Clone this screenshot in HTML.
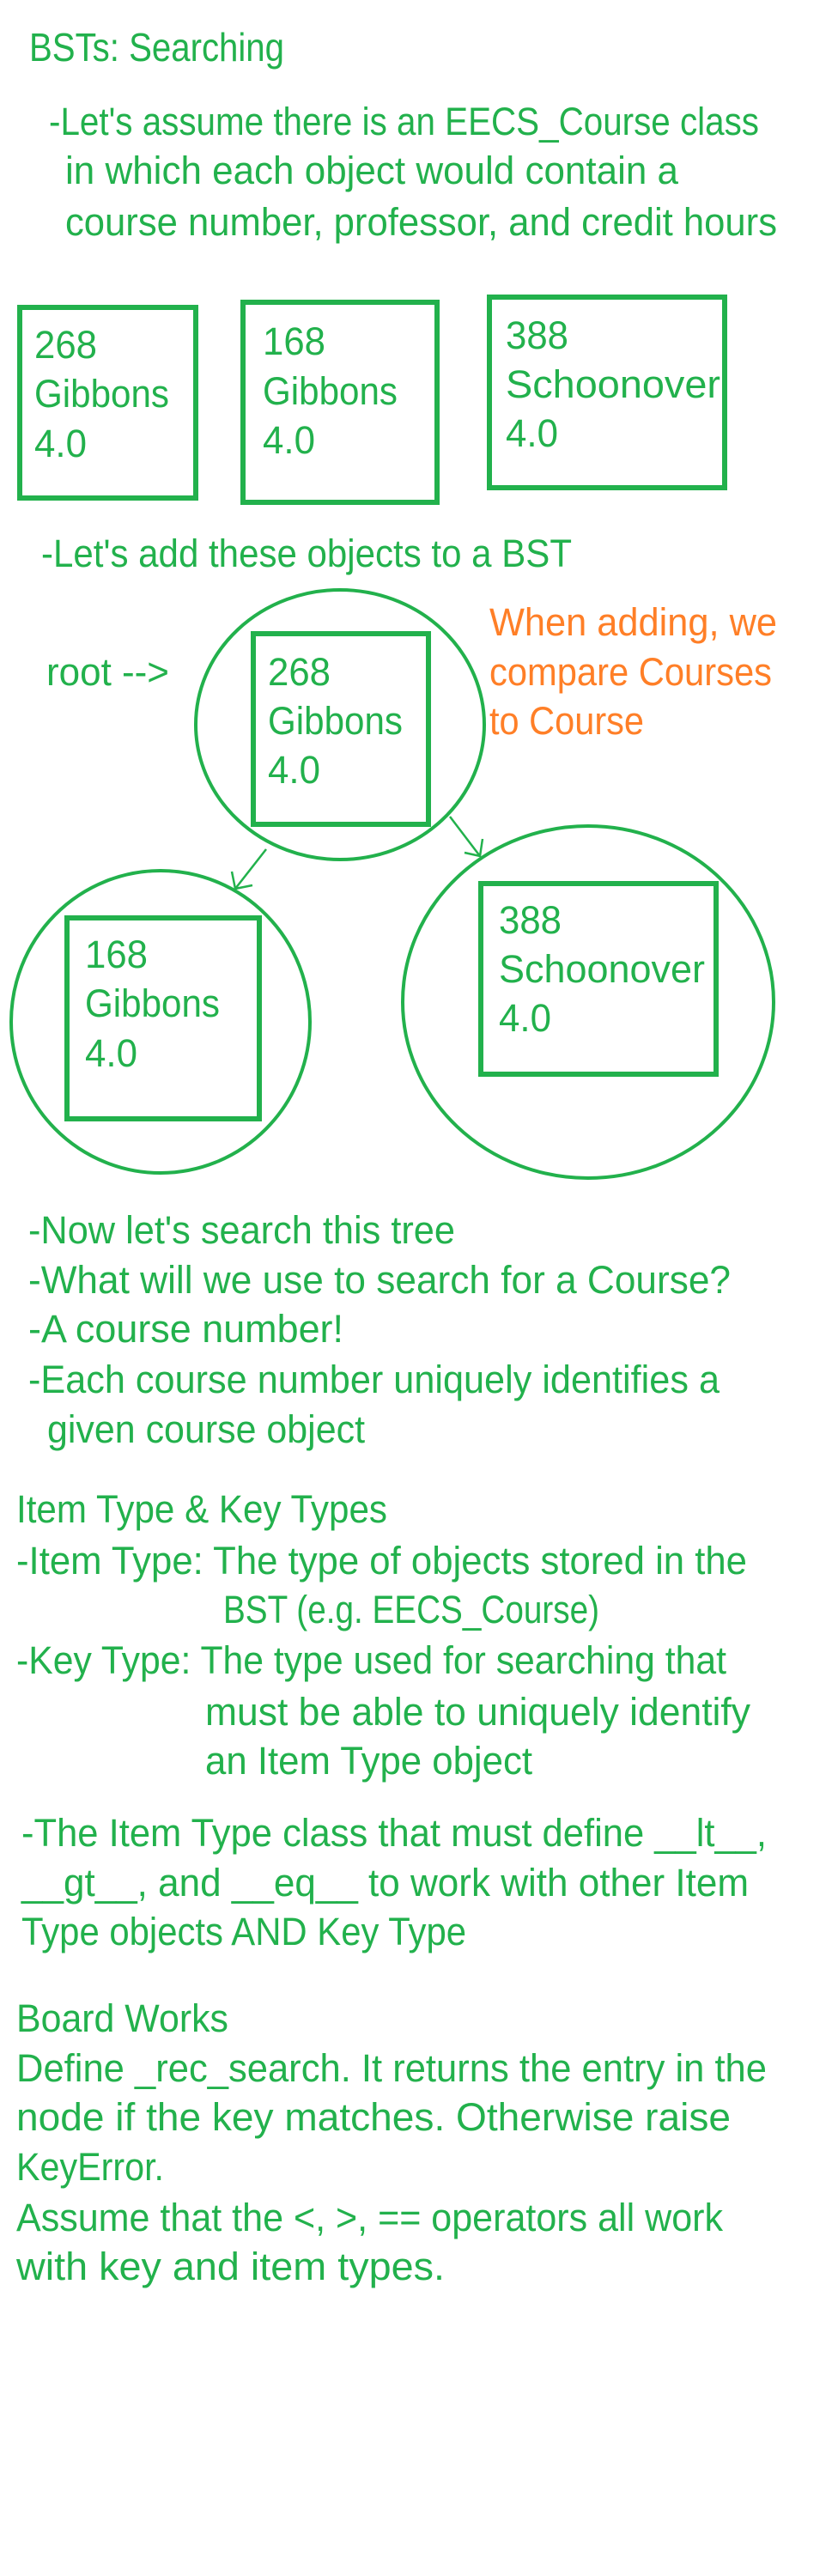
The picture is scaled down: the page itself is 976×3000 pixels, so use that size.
<!DOCTYPE html>
<html><head><meta charset="utf-8"><style>
html,body{margin:0;padding:0;background:#fff;}
svg{display:block;}
text{font-family:"Liberation Sans",sans-serif;font-size:45px;fill:#22b14c;}
.o{fill:#ff7f27;}
</style></head><body>
<svg width="976" height="3000" viewBox="0 0 976 3000" xmlns="http://www.w3.org/2000/svg">
<text x="34" y="71" textLength="297" lengthAdjust="spacingAndGlyphs" style="font-size:46px">BSTs: Searching</text>
<text x="57" y="157" textLength="827" lengthAdjust="spacingAndGlyphs">-Let's assume there is an EECS_Course class</text>
<text x="76" y="214" textLength="714" lengthAdjust="spacingAndGlyphs">in which each object would contain a</text>
<text x="76" y="274" textLength="829" lengthAdjust="spacingAndGlyphs">course number, professor, and credit hours</text>
<g fill="none" stroke="#22b14c" stroke-width="6">
<rect x="23" y="358" width="205" height="222"/>
<rect x="283" y="352" width="226" height="233"/>
<rect x="570" y="346" width="274" height="222"/>
</g>
<text x="40" y="417" textLength="73" lengthAdjust="spacingAndGlyphs">268</text>
<text x="40" y="474" textLength="157" lengthAdjust="spacingAndGlyphs">Gibbons</text>
<text x="40" y="532" textLength="61" lengthAdjust="spacingAndGlyphs">4.0</text>
<text x="306" y="413" textLength="73" lengthAdjust="spacingAndGlyphs">168</text>
<text x="306" y="471" textLength="157" lengthAdjust="spacingAndGlyphs">Gibbons</text>
<text x="306" y="528" textLength="61" lengthAdjust="spacingAndGlyphs">4.0</text>
<text x="589" y="406" textLength="73" lengthAdjust="spacingAndGlyphs">388</text>
<text x="589" y="463" textLength="250" lengthAdjust="spacingAndGlyphs">Schoonover</text>
<text x="589" y="520" textLength="61" lengthAdjust="spacingAndGlyphs">4.0</text>

<text x="48" y="660" textLength="618" lengthAdjust="spacingAndGlyphs">-Let's add these objects to a BST</text>

<text x="54" y="798" textLength="143" lengthAdjust="spacingAndGlyphs">root --&gt;</text>
<text class="o" x="570" y="740" textLength="335" lengthAdjust="spacingAndGlyphs">When adding, we</text>
<text class="o" x="570" y="798" textLength="329" lengthAdjust="spacingAndGlyphs">compare Courses</text>
<text class="o" x="570" y="855" textLength="180" lengthAdjust="spacingAndGlyphs">to Course</text>

<g fill="none" stroke="#22b14c">
<ellipse cx="396" cy="844" rx="168" ry="157" stroke-width="4"/>
<rect x="295" y="738" width="204" height="222" stroke-width="6"/>
<ellipse cx="187" cy="1190" rx="174" ry="176" stroke-width="4"/>
<rect x="78" y="1069" width="224" height="234" stroke-width="6"/>
<ellipse cx="685" cy="1167" rx="216" ry="205" stroke-width="4"/>
<rect x="560" y="1029" width="274" height="222" stroke-width="6"/>
<path d="M310 989 L274 1035 M270 1015 L274 1035 L294 1031" stroke-width="2.5"/>
<path d="M524 951 L559 997 M562 977 L559 997 L541 993" stroke-width="2.5"/>
</g>
<text x="312" y="798" textLength="73" lengthAdjust="spacingAndGlyphs">268</text>
<text x="312" y="855" textLength="157" lengthAdjust="spacingAndGlyphs">Gibbons</text>
<text x="312" y="912" textLength="61" lengthAdjust="spacingAndGlyphs">4.0</text>
<text x="99" y="1127" textLength="73" lengthAdjust="spacingAndGlyphs">168</text>
<text x="99" y="1184" textLength="157" lengthAdjust="spacingAndGlyphs">Gibbons</text>
<text x="99" y="1242" textLength="61" lengthAdjust="spacingAndGlyphs">4.0</text>
<text x="581" y="1087" textLength="73" lengthAdjust="spacingAndGlyphs">388</text>
<text x="581" y="1144" textLength="240" lengthAdjust="spacingAndGlyphs">Schoonover</text>
<text x="581" y="1201" textLength="61" lengthAdjust="spacingAndGlyphs">4.0</text>

<text x="33" y="1448" textLength="497" lengthAdjust="spacingAndGlyphs">-Now let's search this tree</text>
<text x="33" y="1506" textLength="818" lengthAdjust="spacingAndGlyphs">-What will we use to search for a Course?</text>
<text x="33" y="1563" textLength="367" lengthAdjust="spacingAndGlyphs">-A course number!</text>
<text x="33" y="1622" textLength="805" lengthAdjust="spacingAndGlyphs">-Each course number uniquely identifies a</text>
<text x="55" y="1680" textLength="370" lengthAdjust="spacingAndGlyphs">given course object</text>

<text x="19" y="1773" textLength="432" lengthAdjust="spacingAndGlyphs">Item Type &amp; Key Types</text>
<text x="19" y="1833" textLength="851" lengthAdjust="spacingAndGlyphs">-Item Type: The type of objects stored in the</text>
<text x="260" y="1890" textLength="438" lengthAdjust="spacingAndGlyphs">BST (e.g. EECS_Course)</text>
<text x="19" y="1949" textLength="827" lengthAdjust="spacingAndGlyphs">-Key Type: The type used for searching that</text>
<text x="239" y="2009" textLength="635" lengthAdjust="spacingAndGlyphs">must be able to uniquely identify</text>
<text x="239" y="2066" textLength="381" lengthAdjust="spacingAndGlyphs">an Item Type object</text>

<text x="25" y="2150" textLength="868" lengthAdjust="spacingAndGlyphs">-The Item Type class that must define __lt__,</text>
<text x="25" y="2208" textLength="847" lengthAdjust="spacingAndGlyphs">__gt__, and __eq__ to work with other Item</text>
<text x="25" y="2265" textLength="518" lengthAdjust="spacingAndGlyphs">Type objects AND Key Type</text>

<text x="19" y="2366" textLength="247" lengthAdjust="spacingAndGlyphs">Board Works</text>
<text x="19" y="2424" textLength="874" lengthAdjust="spacingAndGlyphs">Define _rec_search. It returns the entry in the</text>
<text x="19" y="2481" textLength="832" lengthAdjust="spacingAndGlyphs">node if the key matches. Otherwise raise</text>
<text x="19" y="2539" textLength="172" lengthAdjust="spacingAndGlyphs">KeyError.</text>
<text x="19" y="2598" textLength="823" lengthAdjust="spacingAndGlyphs">Assume that the &lt;, &gt;, == operators all work</text>
<text x="19" y="2655" textLength="499" lengthAdjust="spacingAndGlyphs">with key and item types.</text>
</svg>
</body></html>
